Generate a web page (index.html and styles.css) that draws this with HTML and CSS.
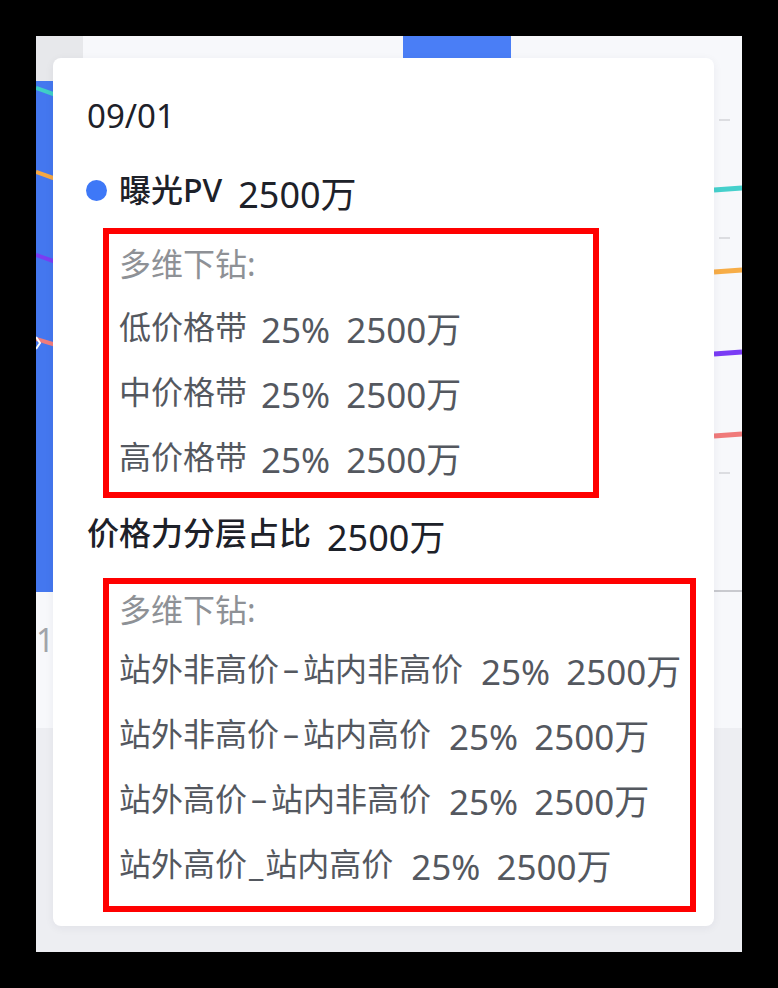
FILE: index.html
```html
<!DOCTYPE html>
<html lang="zh-CN">
<head>
<meta charset="utf-8">
<title>Tooltip</title>
<link rel="stylesheet" href="styles.css">
</head>
<body>
<div class="frame">
  <svg class="chart" width="706" height="916" viewBox="0 0 706 916" aria-hidden="true">
    <rect width="706" height="916" fill="#f7f8fb"/>
    <rect y="692" width="706" height="224" fill="#edeef2"/>
    <rect width="47" height="45" fill="#e7e8eb"/>
    <rect y="45" width="47" height="511" fill="#4477ef"/>
    <rect x="367" width="108" height="22" fill="#4a7ef6"/>
    <line x1="0" y1="52" x2="20" y2="59" stroke="#3fcfc6" stroke-width="4"/>
    <line x1="0" y1="136" x2="20" y2="143" stroke="#f5a844" stroke-width="4"/>
    <line x1="0" y1="219" x2="20" y2="226" stroke="#7b3df2" stroke-width="4"/>
    <line x1="0" y1="303" x2="20" y2="309" stroke="#f07c7c" stroke-width="4"/>
    <polyline points="0,301 4,307 0,313" fill="none" stroke="#ffffff" stroke-width="2"/>
    <line x1="683" y1="84" x2="694" y2="84" stroke="#dcdde1" stroke-width="2"/>
    <line x1="683" y1="202" x2="694" y2="202" stroke="#dcdde1" stroke-width="2"/>
    <line x1="683" y1="437" x2="694" y2="437" stroke="#dcdde1" stroke-width="2"/>
    <line x1="678" y1="154" x2="706" y2="152" stroke="#45d0cc" stroke-width="5"/>
    <line x1="678" y1="236" x2="706" y2="234" stroke="#f7ad47" stroke-width="5"/>
    <line x1="678" y1="318" x2="706" y2="316" stroke="#7a3cf5" stroke-width="5"/>
    <line x1="678" y1="400" x2="706" y2="398" stroke="#f07a7a" stroke-width="5"/>
    <line x1="678" y1="555" x2="706" y2="555" stroke="#c9cacf" stroke-width="2"/>
    <text class="axis" x="0" y="616">1</text>
  </svg>

  <div class="tooltip">
    <div class="date">09/01</div>
    <div class="head"><span class="dot"></span><span class="lbl">曝光PV</span><span class="val">2500万</span></div>

    <div class="box box1">
      <div class="note">多维下钻:</div>
      <div class="item"><span class="lbl">低价格带</span><span class="num pct">25%</span><span class="num">2500万</span></div>
      <div class="item"><span class="lbl">中价格带</span><span class="num pct">25%</span><span class="num">2500万</span></div>
      <div class="item"><span class="lbl">高价格带</span><span class="num pct">25%</span><span class="num">2500万</span></div>
    </div>

    <div class="head split"><span class="lbl">价格力分层占比</span><span class="val">2500万</span></div>

    <div class="box box2">
      <div class="note">多维下钻:</div>
      <div class="item"><span class="lbl">站外非高价<span class="sep">–</span>站内非高价</span><span class="num pct">25%</span><span class="num">2500万</span></div>
      <div class="item"><span class="lbl">站外非高价<span class="sep">–</span>站内高价</span><span class="num pct">25%</span><span class="num">2500万</span></div>
      <div class="item"><span class="lbl">站外高价<span class="sep">–</span>站内非高价</span><span class="num pct">25%</span><span class="num">2500万</span></div>
      <div class="item"><span class="lbl">站外高价<span class="sep under">_</span>站内高价</span><span class="num pct">25%</span><span class="num">2500万</span></div>
    </div>
  </div>
</div>
</body>
</html>
```

FILE: styles.css
```css
html, body {
  margin: 0;
  padding: 0;
  background: #000;
}

body {
  font-family: "Noto Sans", "Noto Sans CJK SC", sans-serif;
}

.frame {
  position: relative;
  width: 706px;
  height: 916px;
  margin: 36px;
  overflow: hidden;
}

.chart {
  display: block;
}

.axis {
  font-family: "Noto Sans", sans-serif;
  font-size: 32px;
  fill: #a1a4aa;
}

.tooltip {
  position: absolute;
  left: 17px;
  top: 22px;
  width: 661px;
  box-sizing: border-box;
  padding: 25px 0 14px 34px;
  background: #fff;
  border-radius: 8px;
  box-shadow: 0 2px 10px rgba(30, 40, 70, 0.06);
}

.date {
  font-size: 33px;
  line-height: 65px;
  color: #1d2129;
}

.head {
  margin-top: 9px;
  font-size: 32px;
  line-height: 65px;
  font-weight: 500;
  color: #1d2129;
  white-space: nowrap;
}

.head.split {
  margin-top: 2px;
}

.dot {
  display: inline-block;
  width: 21px;
  height: 21px;
  border-radius: 50%;
  background: #3e78f7;
  margin-left: -1px;
  margin-right: 12px;
  vertical-align: 1px;
}

.head .val {
  font-size: 36px;
  line-height: 1;
  font-weight: 400;
  vertical-align: -6px;
  margin-left: 16px;
}

.box {
  box-sizing: border-box;
  border: 6px solid #ff0000;
  margin-left: 16px;
  padding-left: 10px;
}

.box1 {
  width: 496px;
  margin-top: 6px;
  padding-bottom: 3px;
}

.box2 {
  width: 593px;
  margin-top: 13px;
  padding-bottom: 10px;
}

.note {
  font-size: 32px;
  line-height: 60px;
  color: #8e9196;
}

.box2 .note {
  line-height: 52px;
}

.item {
  font-size: 32px;
  line-height: 65px;
  color: #54585f;
  white-space: nowrap;
}

.num {
  font-size: 35px;
  line-height: 1;
  vertical-align: -4px;
  margin-left: 16px;
}

.num.pct {
  margin-left: 14px;
}

.box2 .num.pct {
  margin-left: 18px;
}

.sep {
  margin: 0 4px;
}

.sep.under {
  margin: 0 2px;
}
```
